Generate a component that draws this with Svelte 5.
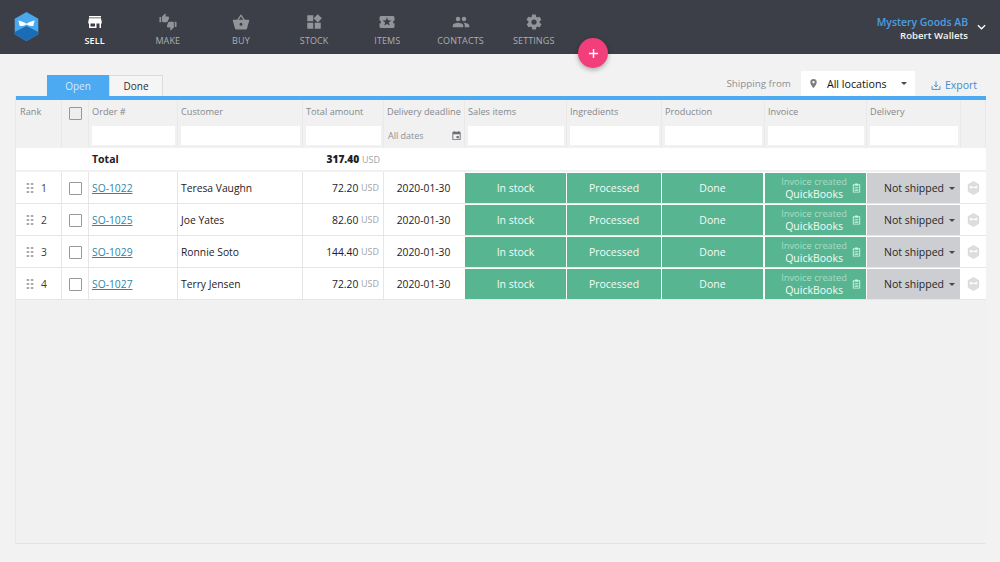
<script>
  const nav = [
    { label: 'SELL', icon: 'sell', active: true },
    { label: 'MAKE', icon: 'make' },
    { label: 'BUY', icon: 'buy' },
    { label: 'STOCK', icon: 'stock' },
    { label: 'ITEMS', icon: 'items' },
    { label: 'CONTACTS', icon: 'contacts' },
    { label: 'SETTINGS', icon: 'settings' }
  ];

  const icons = {
    sell: 'M20 4H4v2h16zm1 10v-2l-1-5H4l-1 5v2h1v6h10v-6h4v6h2v-6h1zm-9 4H6v-4h6z',
    buy: 'M17.200 9 12.800 2.500c-.4-.6-1.200-.6-1.600 0L6.800 9H2c-.6 0-1 .4-1 1l3 10.500c.2.900 1 1.500 1.900 1.500h12.200c.9 0 1.700-.6 1.900-1.500L23 10c0-.6-.4-1-1-1zM9 9l3-4.400L15 9zm3 8a2 2 0 1 1 0-4 2 2 0 0 1 0 4z',
    stock: 'M3 3h8v8H3zM3 13h8v8H3zM13 13h8v8h-8zM17 1.500 22.500 7 17 12.500 11.500 7z',
    items: 'M22 10V6a2 2 0 0 0-2-2H4a2 2 0 0 0-2 2v4a2 2 0 0 1 0 4v4c0 1.100.9 2 2 2h16a2 2 0 0 0 2-2v-4a2 2 0 0 1 0-4zm-6.400 6.800L12 14.500l-3.600 2.300 1.100-4.100-3.300-2.700 4.300-.3L12 5.700l1.500 4 4.300.3-3.300 2.700z',
    contacts: 'M16 11a3 3 0 1 0 0-6 3 3 0 0 0 0 6zm-8 0a3 3 0 1 0 0-6 3 3 0 0 0 0 6zm0 2c-2.300 0-7 1.200-7 3.500V19h14v-2.500C15 14.200 10.300 13 8 13zm8 0h-1c1.200.8 2 2 2 3.500V19h6v-2.500c0-2.300-4.700-3.500-7-3.500z',
    settings: 'M19.400 13c0-.3.1-.6.1-1s0-.7-.1-1l2.100-1.600c.2-.2.2-.4.1-.6l-2-3.500c-.1-.2-.4-.3-.6-.2l-2.500 1c-.5-.4-1.100-.7-1.700-1l-.4-2.600c0-.3-.2-.5-.5-.5h-4c-.3 0-.5.2-.5.400l-.4 2.700c-.6.200-1.200.6-1.700 1l-2.500-1c-.2-.1-.5 0-.6.200l-2 3.500c-.1.200-.1.500.1.600L4.600 11c0 .3-.1.700-.1 1s0 .7.100 1l-2.100 1.600c-.2.200-.2.400-.1.600l2 3.500c.1.200.4.300.6.200l2.500-1c.5.400 1.100.7 1.700 1l.4 2.700c0 .2.200.4.500.4h4c.3 0 .5-.2.5-.4l.4-2.700c.6-.2 1.200-.6 1.700-1l2.500 1c.2.100.5 0 .6-.2l2-3.500c.1-.2.1-.5-.1-.6zM12 15.500a3.500 3.500 0 1 1 0-7 3.500 3.500 0 0 1 0 7z'
  };

  const thumbUp = 'M1 21h4V9H1zm22-11c0-1.100-.9-2-2-2h-6.310l.95-4.570.03-.32c0-.41-.17-.79-.44-1.060L14.170 1 7.590 7.590C7.220 7.950 7 8.450 7 9v10c0 1.100.9 2 2 2h9c.83 0 1.540-.5 1.840-1.220l3.020-7.050c.09-.23.140-.47.140-.73z';
  const thumbDown = 'M15 3H6c-.83 0-1.540.5-1.840 1.220l-3.020 7.050c-.09.23-.14.47-.14.73v2c0 1.100.9 2 2 2h6.310l-.95 4.570-.03.32c0 .41.170.79.44 1.060L9.830 23l6.590-6.590c.36-.36.58-.86.58-1.410V5c0-1.100-.9-2-2-2zm4 0v12h4V3z';

  const headers = ['Order #', 'Customer', 'Total amount', 'Delivery deadline', 'Sales items', 'Ingredients', 'Production', 'Invoice', 'Delivery'];

  const orders = [
    { rank: 1, id: 'SO-1022', customer: 'Teresa Vaughn', amount: '72.20' },
    { rank: 2, id: 'SO-1025', customer: 'Joe Yates', amount: '82.60' },
    { rank: 3, id: 'SO-1029', customer: 'Ronnie Soto', amount: '144.40' },
    { rank: 4, id: 'SO-1027', customer: 'Terry Jensen', amount: '72.20' }
  ];
</script>

<header class="topbar">
  <svg class="logo" viewBox="0 0 28 32" aria-hidden="true">
    <path d="M14 0 27 7.500v17L14 32 1 24.500v-17z" fill="#4aa8ec" />
    <path d="M1 22 14 15.500 27 22v2.500L14 32 1 24.500z" fill="#1a6cb5" />
    <path d="M5 9.500c3 .5 6 1.700 9 3.500 3-1.800 6-3 9-3.500l-1.500 6c-2.500.3-5-.3-7.500-1.700-2.500 1.400-5 2-7.500 1.700z" fill="#fff" />
  </svg>
  <nav>
    {#each nav as item}
      <a class="nav-item" class:active={item.active} href="#{item.icon}">
        <svg viewBox="0 0 24 24" aria-hidden="true">
          {#if item.icon === 'make'}
            <path d={thumbUp} transform="translate(0 0) scale(.58)" />
            <path d={thumbDown} transform="translate(10 10) scale(.58)" />
          {:else}
            <path d={icons[item.icon]} fill-rule="evenodd" />
          {/if}
        </svg>
        <span>{item.label}</span>
      </a>
    {/each}
  </nav>
  <div class="account">
    <div class="account-names">
      <div class="company">Mystery Goods AB</div>
      <div class="user">Robert Wallets</div>
    </div>
    <svg class="chevron" viewBox="0 0 10 6" aria-hidden="true"><path d="M1 1l4 4 4-4" /></svg>
  </div>
  <button class="fab" aria-label="Add">
    <svg viewBox="0 0 12 12" aria-hidden="true"><path d="M6 1v10M1 6h10" /></svg>
  </button>
</header>

<main>
  <div class="toolbar">
    <div class="tabs">
      <button class="tab open">Open</button>
      <button class="tab done">Done</button>
    </div>
    <div class="tools">
      <span class="ship-label">Shipping from</span>
      <div class="location">
        <svg viewBox="0 0 24 24" aria-hidden="true"><path d="M12 2a7 7 0 0 0-7 7c0 5.200 7 13 7 13s7-7.800 7-13a7 7 0 0 0-7-7zm0 9.500a2.500 2.500 0 1 1 0-5 2.500 2.500 0 0 1 0 5z" fill-rule="evenodd" /></svg>
        <span>All locations</span>
        <i class="caret"></i>
      </div>
      <a class="export" href="#export">
        <svg viewBox="0 0 14 14" aria-hidden="true"><path d="M7 1v8M4.200 6.200 7 9l2.800-2.800M1.500 8v4.500h11V8" /></svg>
        Export
      </a>
    </div>
  </div>

  <div class="panel">
    <div class="row head">
      <div class="cell rank-head">Rank</div>
      <div class="cell check-cell"><span class="checkbox"></span></div>
      {#each headers as title}
        <div class="cell head-cell">
          <span class="title">{title}</span>
          {#if title === 'Delivery deadline'}
            <div class="date-filter">
              <span>All dates</span>
              <svg viewBox="0 0 24 24" aria-hidden="true"><path d="M19 4h-1V2h-2v2H8V2H6v2H5a2 2 0 0 0-2 2v14c0 1.100.9 2 2 2h14a2 2 0 0 0 2-2V6a2 2 0 0 0-2-2zm0 16H5V9h14zM12 13h5v5h-5z" /></svg>
            </div>
          {:else}
            <div class="filter"></div>
          {/if}
        </div>
      {/each}
      <div class="cell"></div>
    </div>

    <div class="row total">
      <div class="total-label">Total</div>
      <div class="total-amount"><b>317.40</b> <small>USD</small></div>
    </div>

    {#each orders as order}
      <div class="row order">
        <div class="cell rank">
          <svg class="grip" viewBox="0 0 8 12" aria-hidden="true">
            <path d="M0 0h3v2.500H0zM5 0h3v2.500H5zM0 4.750h3v2.500H0zM5 4.750h3v2.500H5zM0 9.500h3V12H0zM5 9.500h3V12H5z" />
          </svg>
          <span>{order.rank}</span>
        </div>
        <div class="cell check-cell"><span class="checkbox"></span></div>
        <div class="cell text"><a href="#{order.id}">{order.id}</a></div>
        <div class="cell text">{order.customer}</div>
        <div class="cell amount">{order.amount} <small>USD</small></div>
        <div class="cell date">2020-01-30</div>
        <div class="status">In stock</div>
        <div class="status">Processed</div>
        <div class="status wide-gap">Done</div>
        <div class="status invoice">
          <div class="invoice-text">
            <small>Invoice created</small>
            <span>QuickBooks</span>
          </div>
          <svg viewBox="0 0 24 24" aria-hidden="true">
            <path d="M9 2h6v2h4a1 1 0 0 1 1 1v16a1 1 0 0 1-1 1H5a1 1 0 0 1-1-1V5a1 1 0 0 1 1-1h4zM6 6v14h12V6h-3v1H9V6zm2 4h8v1.500H8zm0 3.500h8V15H8zm0 3.500h8v1.500H8z" fill-rule="evenodd" />
          </svg>
        </div>
        <div class="delivery">Not shipped <i class="caret"></i></div>
        <div class="cell ship-icon">
          <svg viewBox="0 0 28 32" aria-hidden="true">
            <path d="M14 0 27 7.500v17L14 32 1 24.500v-17z" />
            <path d="M5 11c3 .5 6 1.500 9 3 3-1.500 6-2.500 9-3l-1.500 5.500c-2.500.3-5-.2-7.500-1.200-2.500 1-5 1.500-7.500 1.200z" fill="#fff" />
          </svg>
        </div>
      </div>
    {/each}
  </div>
</main>

<style>
  :global(body) {
    background: #f2f2f2;
    color: #1f2024;
    font-family: 'Open Sans', sans-serif;
    font-size: 11px;
  }

  .topbar {
    position: relative;
    display: flex;
    align-items: center;
    height: 54px;
    padding: 0 14px 0 13px;
    background: #3c3f48;
    box-sizing: border-box;
  }

  .logo {
    width: 27px;
    height: 29px;
    flex: none;
    margin-top: -1px;
  }

  nav {
    display: flex;
    margin-left: 18px;
  }

  .nav-item {
    display: flex;
    flex-direction: column;
    align-items: center;
    width: 73.200px;
    color: #adaeb3;
    text-decoration: none;
    font-size: 9px;
    letter-spacing: 0.1px;
  }

  .nav-item svg {
    width: 18px;
    height: 18px;
    margin: 12px 0 3px;
    fill: #92949a;
  }

  .nav-item span {
    line-height: 14px;
    margin-bottom: 5px;
  }

  .nav-item.active {
    color: #fff;
    font-weight: 600;
  }

  .nav-item.active svg {
    fill: #fff;
  }

  .account {
    display: flex;
    align-items: center;
    margin-left: auto;
  }

  .account-names {
    margin-top: 4px;
    text-align: right;
    font-weight: 600;
    line-height: 13px;
  }

  .company {
    color: #4a9fe0;
    font-size: 10.400px;
  }

  .user {
    color: #f4f4f4;
    font-size: 9.600px;
  }

  .chevron {
    width: 9px;
    height: 6px;
    margin-left: 9px;
    fill: none;
    stroke: #fff;
    stroke-width: 1.400;
  }

  .fab {
    position: absolute;
    left: 578px;
    top: 38px;
    width: 30px;
    height: 30px;
    padding: 0;
    display: flex;
    align-items: center;
    justify-content: center;
    border: none;
    border-radius: 50%;
    background: #f23e7a;
    box-shadow: 0 2px 5px rgba(0, 0, 0, 0.3);
  }

  .fab svg {
    width: 11px;
    height: 11px;
    fill: none;
    stroke: #fff;
    stroke-width: 1.600;
  }

  main {
    padding: 17px 14px 0 16px;
  }

  .toolbar {
    display: flex;
    justify-content: space-between;
    align-items: flex-end;
    height: 25px;
  }

  .tabs {
    display: flex;
    margin-left: 31px;
  }

  .tab {
    height: 21px;
    padding: 0;
    font: 500 10px 'Open Sans', sans-serif;
    border: none;
  }

  .tab.open {
    width: 62px;
    background: #4baaf2;
    color: #d6ecfb;
  }

  .tab.done {
    width: 54px;
    background: #f5f5f5;
    color: #2c2d30;
    border: 1px solid #dcdcdc;
    border-bottom: none;
  }

  .tools {
    display: flex;
    align-items: flex-start;
    height: 25px;
  }

  .ship-label {
    margin-top: 5px;
    color: #8d8e92;
    font-size: 9.800px;
    line-height: 16px;
  }

  .location {
    display: flex;
    align-items: center;
    width: 114px;
    height: 25px;
    margin-left: 10px;
    background: #fff;
    color: #111216;
    font-size: 10.700px;
    box-sizing: border-box;
    padding: 0 8px 0 7px;
  }

  .location svg {
    width: 11px;
    height: 13px;
    fill: #7d7f84;
    margin-right: 8px;
  }

  .location .caret {
    margin-left: auto;
  }

  .caret {
    display: inline-block;
    width: 0;
    height: 0;
    border: 3px solid transparent;
    border-top-color: #45474c;
    border-bottom: none;
    vertical-align: middle;
  }

  .export {
    display: flex;
    align-items: center;
    gap: 4px;
    margin: 6px 9px 0 16px;
    color: #3b8fd0;
    text-decoration: none;
    font-size: 10.500px;
    line-height: 16px;
  }

  .export svg {
    width: 10px;
    height: 11px;
    fill: none;
    stroke: #3b8fd0;
    stroke-width: 1.300;
  }

  .panel {
    height: 448px;
    box-sizing: border-box;
    border-top: 4px solid #4baaf2;
    border-bottom: 1px solid #e4e4e4;
    background: #f1f1f1;
    box-shadow: -1px 0 0 #e8e8e8;
  }

  .row {
    display: grid;
    grid-template-columns: 46px 27px 89px 125px 81px 81px 102px 95px 103px 102px 94px 25px;
  }

  .cell {
    box-sizing: border-box;
    border-right: 1px solid #e6e6e6;
  }

  .head {
    height: 48px;
    background: #f1f1f1;
    color: #86878b;
    font-size: 9.200px;
  }

  .head .cell {
    border-right-color: #e9e9e9;
  }

  .rank-head {
    padding: 5px 4px;
    line-height: 14px;
  }

  .head-cell {
    padding: 5px 2px 0 3px;
  }

  .title {
    display: block;
    line-height: 14px;
    white-space: nowrap;
  }

  .filter {
    height: 19px;
    margin-top: 7px;
    background: #fff;
  }

  .date-filter {
    display: flex;
    align-items: center;
    justify-content: space-between;
    height: 19px;
    margin-top: 7px;
    padding-left: 1px;
    color: #8f9094;
    font-size: 9px;
  }

  .date-filter svg {
    width: 11px;
    height: 11px;
    fill: #6c6e73;
  }

  .check-cell {
    display: flex;
    justify-content: center;
  }

  .head .check-cell {
    padding-top: 7px;
  }

  .order .check-cell {
    align-items: center;
    padding-top: 1px;
  }

  .checkbox {
    width: 13px;
    height: 13px;
    box-sizing: border-box;
    border: 1px solid #96979b;
    border-radius: 1px;
    background: #fff;
  }

  .head .checkbox {
    background: #eeeeee;
  }

  .total {
    grid-template-columns: 287px 81px;
    height: 22px;
    margin-bottom: 2px;
    background: #fff;
    align-items: center;
    font-weight: 700;
    font-size: 10.500px;
  }

  .total-label {
    padding-left: 76px;
  }

  .total-amount {
    text-align: right;
    padding-right: 4px;
    white-space: nowrap;
  }

  .total-amount b {
    font-size: 10.200px;
  }

  small {
    font-size: 9px;
    font-weight: 400;
    color: #a3a4a8;
  }

  .order {
    height: 32px;
    background: #fff;
    border-bottom: 1px solid #e6e6e6;
    box-sizing: border-box;
    font-size: 10.300px;
  }

  .order .cell {
    display: flex;
    align-items: center;
  }

  .rank {
    gap: 7px;
    padding-left: 10px;
    color: #3a3b3f;
  }

  .grip {
    width: 8px;
    height: 10px;
    fill: #a8a9ad;
  }

  .text {
    padding-left: 3px;
    white-space: nowrap;
  }

  .text a {
    color: #2e86ab;
  }

  .order .amount {
    justify-content: flex-end;
    padding-right: 4px;
    white-space: pre;
  }

  .order .date {
    justify-content: center;
    padding-right: 2px;
    border-right: none;
  }

  .status {
    display: flex;
    align-items: center;
    justify-content: center;
    margin: 1px 1px 0 0;
    background: #58b591;
    color: #f4fbf8;
    font-size: 10.500px;
  }

  .status.wide-gap {
    margin-right: 2px;
  }

  .invoice {
    justify-content: flex-end;
    gap: 4px;
    padding-right: 4px;
  }

  .invoice-text {
    display: flex;
    flex-direction: column;
    align-items: center;
    line-height: 13px;
  }

  .invoice-text small {
    font-size: 9.300px;
    color: #a9dcc8;
  }

  .invoice svg {
    width: 11px;
    height: 12px;
    fill: #d9f1e7;
  }

  .delivery {
    display: flex;
    align-items: center;
    justify-content: center;
    gap: 5px;
    margin: 1px 1px 0 0;
    padding-left: 12px;
    background: #ccced1;
    color: #26272b;
    font-size: 10.500px;
  }

  .ship-icon {
    justify-content: center;
    border-right: none !important;
  }

  .ship-icon svg {
    width: 13px;
    height: 14px;
    fill: #dcdddf;
  }
</style>
